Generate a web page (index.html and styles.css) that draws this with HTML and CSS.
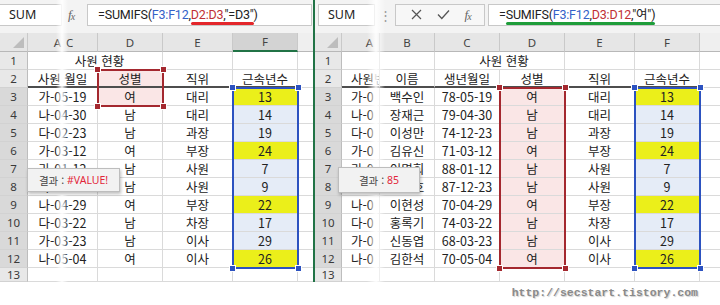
FILE: index.html
```html
<!DOCTYPE html>
<html lang="ko">
<head>
    <meta charset="UTF-8">
    <link rel="stylesheet" href="styles.css">
</head>
<body>
<div class="shot">

    <!-- left: the #VALUE! case -->
    <div class="panel left">
        <div class="fbar">
            <div class="namebox nb-left">SUM</div>
            <div class="fxi fx-left">f<span>x</span></div>
            <div class="formula f-left">=SUMIFS(<span class="rb">F3:F12</span>,<span class="mark mark-red"><span class="rr">D2:D3</span>,"=D3"</span>)</div>
        </div>
        <div class="sheet sheet-left">
            <div class="h corner"><i class="tri"></i></div>
            <div class="h hac"><span>A</span><span>C</span></div>
            <div class="h">D</div>
            <div class="h">E</div>
            <div class="h hsel">F</div>
            <div class="h hend"></div>

            <div class="r">1</div>
            <div class="c title span2">사원 현황</div>
            <div class="c"></div>
            <div class="c"></div>
            <div class="c end"></div>

            <div class="r">2</div>
            <div class="c hd">사원 월일</div>
            <div class="c hd pink">성별</div>
            <div class="c hd">직위</div>
            <div class="c hd">근속년수</div>
            <div class="c end"></div>

            <div class="r rs">3</div><div class="c">가-05-19</div><div class="c pink">여</div><div class="c">대리</div><div class="c yel">13</div><div class="c end"></div>
            <div class="r rs">4</div><div class="c">나-04-30</div><div class="c">남</div><div class="c">대리</div><div class="c blue">14</div><div class="c end"></div>
            <div class="r rs">5</div><div class="c">다-02-23</div><div class="c">남</div><div class="c">과장</div><div class="c blue">19</div><div class="c end"></div>
            <div class="r rs">6</div><div class="c">가-03-12</div><div class="c">여</div><div class="c">부장</div><div class="c yel">24</div><div class="c end"></div>
            <div class="r rs">7</div><div class="c">라-01-12</div><div class="c">남</div><div class="c">사원</div><div class="c blue">7</div><div class="c end"></div>
            <div class="r rs">8</div><div class="c">라-12-23</div><div class="c">남</div><div class="c">사원</div><div class="c blue">9</div><div class="c end"></div>
            <div class="r rs">9</div><div class="c">나-04-29</div><div class="c">여</div><div class="c">부장</div><div class="c yel">22</div><div class="c end"></div>
            <div class="r rs">10</div><div class="c">다-03-22</div><div class="c">남</div><div class="c">차장</div><div class="c blue">17</div><div class="c end"></div>
            <div class="r rs">11</div><div class="c">가-03-23</div><div class="c">남</div><div class="c">이사</div><div class="c blue">29</div><div class="c end"></div>
            <div class="r rs">12</div><div class="c">나-05-04</div><div class="c">여</div><div class="c">이사</div><div class="c yel">26</div><div class="c end"></div>

            <div class="r">13</div><div class="c"></div><div class="c"></div><div class="c"></div><div class="c"></div><div class="c end"></div>
        </div>

        <div class="sel sel-red sl-d"><i class="hn tl"></i><i class="hn tr"></i><i class="hn bl"></i><i class="hn br"></i></div>
        <div class="sel sel-blue sl-f"><i class="hn tl"></i><i class="hn tr"></i><i class="hn bl"></i><i class="hn br"></i></div>
        <div class="fade fade-left"></div>
        <div class="tip tip-left">결과 : <span class="err">#VALUE!</span></div>
    </div>

    <!-- right: the working formula -->
    <div class="panel right">
        <div class="fbar">
            <div class="namebox nb-right">SUM</div>
            <div class="dots">⋮</div>
            <div class="btns">
                <svg width="11" height="11" viewBox="0 0 11 11"><path d="M1 1L10 10M10 1L1 10" stroke="#555" stroke-width="1.2" fill="none"/></svg>
                <svg width="13" height="11" viewBox="0 0 13 11"><path d="M1 5.5L4.8 9.5L12 1.5" stroke="#555" stroke-width="1.3" fill="none"/></svg>
                <div class="fxi">f<span>x</span></div>
            </div>
            <div class="formula f-right">=<span class="mark mark-green">SUMIFS(<span class="rb">F3:F12</span>,<span class="rr">D3:D12</span>,"여")</span></div>
        </div>
        <div class="sheet sheet-right">
            <div class="h corner"><i class="tri"></i></div>
            <div class="h ha">A</div>
            <div class="h">B</div>
            <div class="h">C</div>
            <div class="h">D</div>
            <div class="h">E</div>
            <div class="h">F</div>
            <div class="h hend"></div>

            <div class="r">1</div>
            <div class="c"></div>
            <div class="c"></div>
            <div class="c title span2">사원 현황</div>
            <div class="c"></div>
            <div class="c"></div>
            <div class="c end"></div>

            <div class="r">2</div>
            <div class="c hd cut">사원번호</div>
            <div class="c hd">이름</div>
            <div class="c hd">생년월일</div>
            <div class="c hd">성별</div>
            <div class="c hd">직위</div>
            <div class="c hd">근속년수</div>
            <div class="c end"></div>

            <div class="r rs">3</div><div class="c cut">가-0</div><div class="c">백수인</div><div class="c">78-05-19</div><div class="c pink">여</div><div class="c">대리</div><div class="c yel">13</div><div class="c end"></div>
            <div class="r rs">4</div><div class="c cut">나-0</div><div class="c">장재근</div><div class="c">79-04-30</div><div class="c pink">남</div><div class="c">대리</div><div class="c blue">14</div><div class="c end"></div>
            <div class="r rs">5</div><div class="c cut">다-0</div><div class="c">이성만</div><div class="c">74-12-23</div><div class="c pink">남</div><div class="c">과장</div><div class="c blue">19</div><div class="c end"></div>
            <div class="r rs">6</div><div class="c cut">가-0</div><div class="c">김유신</div><div class="c">71-03-12</div><div class="c pink">여</div><div class="c">부장</div><div class="c yel">24</div><div class="c end"></div>
            <div class="r rs">7</div><div class="c cut">라-0</div><div class="c">이명희</div><div class="c">88-01-12</div><div class="c pink">남</div><div class="c">사원</div><div class="c blue">7</div><div class="c end"></div>
            <div class="r rs">8</div><div class="c cut">라-0</div><div class="c">박성호</div><div class="c">87-12-23</div><div class="c pink">남</div><div class="c">사원</div><div class="c blue">9</div><div class="c end"></div>
            <div class="r rs">9</div><div class="c cut">나-0</div><div class="c">이현성</div><div class="c">70-04-29</div><div class="c pink">여</div><div class="c">부장</div><div class="c yel">22</div><div class="c end"></div>
            <div class="r rs">10</div><div class="c cut">다-0</div><div class="c">홍록기</div><div class="c">74-03-22</div><div class="c pink">남</div><div class="c">차장</div><div class="c blue">17</div><div class="c end"></div>
            <div class="r rs">11</div><div class="c cut">가-0</div><div class="c">신동엽</div><div class="c">68-03-23</div><div class="c pink">남</div><div class="c">이사</div><div class="c blue">29</div><div class="c end"></div>
            <div class="r rs">12</div><div class="c cut">나-0</div><div class="c">김한석</div><div class="c">70-05-04</div><div class="c pink">여</div><div class="c">이사</div><div class="c yel">26</div><div class="c end"></div>

            <div class="r">13</div><div class="c"></div><div class="c"></div><div class="c"></div><div class="c"></div><div class="c"></div><div class="c"></div><div class="c end"></div>
        </div>

        <div class="sel sel-red sr-d"><i class="hn tl"></i><i class="hn tr"></i><i class="hn bl"></i><i class="hn br"></i></div>
        <div class="sel sel-blue sr-f"><i class="hn tl"></i><i class="hn tr"></i><i class="hn bl"></i><i class="hn br"></i></div>
        <div class="fade fade-right"></div>
        <div class="tip tip-right">결과 : <span class="err">85</span></div>
    </div>
</div>
<div class="credit">http://secstart.tistory.com</div>
</body>
</html>
```

FILE: styles.css
```css
body {
    margin: 0;
    width: 720px;
    height: 305px;
    background: #fff;
    overflow: hidden;
    font-family: "Noto Sans CJK KR", sans-serif;
}

.shot {
    display: flex;
    height: 282px;
}

.panel {
    position: relative;
    display: flex;
    flex-direction: column;
    overflow: hidden;
}

.left {
    width: 313px;
}

.right {
    width: 405px;
    border-left: 2px solid #217346;
}

/* formula bar */
.fbar {
    display: flex;
    align-items: center;
    height: 33px;
    padding-bottom: 4px;
    box-sizing: border-box;
    background: #f3f3f3;
}

.namebox,
.formula,
.btns {
    height: 22px;
    box-sizing: border-box;
    background: #fff;
    border: 1px solid #c8c8c8;
    font: 12.5px "Noto Sans", "Noto Sans CJK KR", sans-serif;
    color: #222;
    line-height: 20px;
    white-space: nowrap;
}

.namebox {
    padding-left: 9px;
}

.nb-left {
    width: 62px;
    border-left: none;
}

.nb-right {
    width: 57px;
    margin-left: 3px;
}

.fxi {
    font: italic 13px "Liberation Serif", serif;
    color: #666;
    letter-spacing: -1px;
}

.fxi span {
    font-size: 10px;
    position: relative;
    top: 1px;
}

.fx-left {
    margin-left: 6px;
}

.formula {
    padding-left: 10px;
    font-family: Roboto, "Noto Sans CJK KR", sans-serif;
    font-size: 12.5px;
    letter-spacing: -0.2px;
}

.f-left {
    width: 225px;
    margin-left: 13px;
}

.f-right {
    width: 232px;
    margin-left: 3px;
    border-right: none;
}

.rb {
    color: #3461c8;
}

.rr {
    color: #bf2f35;
}

.mark {
    position: relative;
}

.mark::after {
    content: "";
    position: absolute;
    left: 0;
    right: 0;
    bottom: -3px;
    height: 2.5px;
    border-radius: 2px;
}

.mark-red::after {
    background: #e3262b;
}

.mark-green::after {
    background: #1e9d3a;
}

.dots {
    width: 20px;
    text-align: center;
    color: #9a9a9a;
    font-size: 13px;
}

.btns {
    display: flex;
    align-items: center;
    justify-content: space-around;
    width: 90px;
    padding: 0 6px 0 8px;
    background: #f7f7f7;
}

/* grid */
.sheet {
    display: grid;
    grid-template-rows: 19px repeat(12, 18px) 14px;
    font-size: 12.5px;
    color: #222;
}

.sheet-left {
    grid-template-columns: 28px 70px 65px 70px 65px 15px;
}

.sheet-right {
    grid-template-columns: 27px 38px 55px 65px 65px 70px 65px 20px;
}

.sheet > div {
    display: flex;
    align-items: center;
    justify-content: center;
    box-sizing: border-box;
    white-space: nowrap;
    overflow: hidden;
}

.c {
    border-right: 1px solid #dadada;
    border-bottom: 1px solid #dadada;
}

.c.end {
    border-right: none;
}

.h {
    background: #e6e6e6;
    border-right: 1px solid #c9c9c9;
    border-bottom: 1px solid #b8b8b8;
    font: 11.5px "Noto Sans", sans-serif;
    color: #444;
}

.h.hend {
    border-right: none;
    background: #efefef;
}

.hsel {
    background: #d3d3d3;
    border-bottom: 2px solid #217346;
}

.corner {
    position: relative;
}

.tri {
    position: absolute;
    right: 3px;
    bottom: 3px;
    width: 0;
    height: 0;
    border-left: 11px solid transparent;
    border-bottom: 11px solid #bdbdbd;
}

.hac {
    gap: 5px;
    padding-left: 2px;
}

.ha {
    padding-left: 18px;
}

.r {
    background: #e8e8e8;
    border-right: 1px solid #bdbdbd;
    border-bottom: 1px solid #d2d2d2;
    font: 11.5px "Noto Sans", sans-serif;
    color: #3a3a3a;
}

.r.rs {
    background: #d9d9d9;
}

.title {
    padding-left: 9px;
}

.span2 {
    grid-column: span 2;
}

.hd {
    border-bottom: 2px solid #4d4d4d;
}

.cut {
    justify-content: flex-start !important;
    padding-left: 9px;
}

.pink {
    background: #fae6e6;
}

.blue {
    background: #e5ecf7;
}

.yel {
    background: #ebef1a;
}

/* selection boxes over the grid */
.sel {
    position: absolute;
    box-sizing: border-box;
    border: 2px solid;
}

.sel-red {
    border-color: #a4282f;
}

.sel-blue {
    border-color: #2c52c0;
}

.hn {
    position: absolute;
    width: 5px;
    height: 5px;
    border: 1px solid #fff;
}

.sel-red .hn {
    background: #a4282f;
}

.sel-blue .hn {
    background: #2c52c0;
}

.tl { left: -5px; top: -5px; }
.tr { right: -5px; top: -5px; }
.bl { left: -5px; bottom: -5px; }
.br { right: -5px; bottom: -5px; }

.sl-d {
    left: 97px;
    top: 69px;
    width: 67px;
    height: 38px;
}

.sl-f {
    left: 232px;
    top: 87px;
    width: 67px;
    height: 182px;
}

.sr-d {
    left: 184px;
    top: 87px;
    width: 67px;
    height: 182px;
}

.sr-f {
    left: 319px;
    top: 87px;
    width: 67px;
    height: 182px;
}

/* white seam where the screenshot was cut */
.fade {
    position: absolute;
    top: 0;
    bottom: 0;
    background: linear-gradient(90deg, rgba(255,255,255,0), rgba(255,255,255,0.9), rgba(255,255,255,0));
}

.fade-left {
    left: 56px;
    width: 12px;
}

.fade-right {
    left: 52px;
    width: 18px;
}

/* result tooltip */
.tip {
    position: absolute;
    box-sizing: border-box;
    display: flex;
    align-items: center;
    justify-content: center;
    background: #f2f2f2;
    border: 1px solid #bdbdbd;
    box-shadow: 1px 2px 3px rgba(0, 0, 0, 0.25);
    font-size: 10.5px;
    color: #444;
    white-space: pre;
}

.tip-left {
    left: 27px;
    top: 168px;
    width: 93px;
    height: 24px;
}

.tip-right {
    left: 23px;
    top: 167px;
    width: 82px;
    height: 26px;
}

.err {
    color: #e2263a;
    font-family: "Noto Sans", sans-serif;
}

.credit {
    height: 23px;
    padding-right: 22px;
    text-align: right;
    font: bold 11.5px "Liberation Mono", monospace;
    line-height: 21px;
    color: #8a8a8a;
    text-shadow: 1px 1px 1px #cfcfcf;
}
```
